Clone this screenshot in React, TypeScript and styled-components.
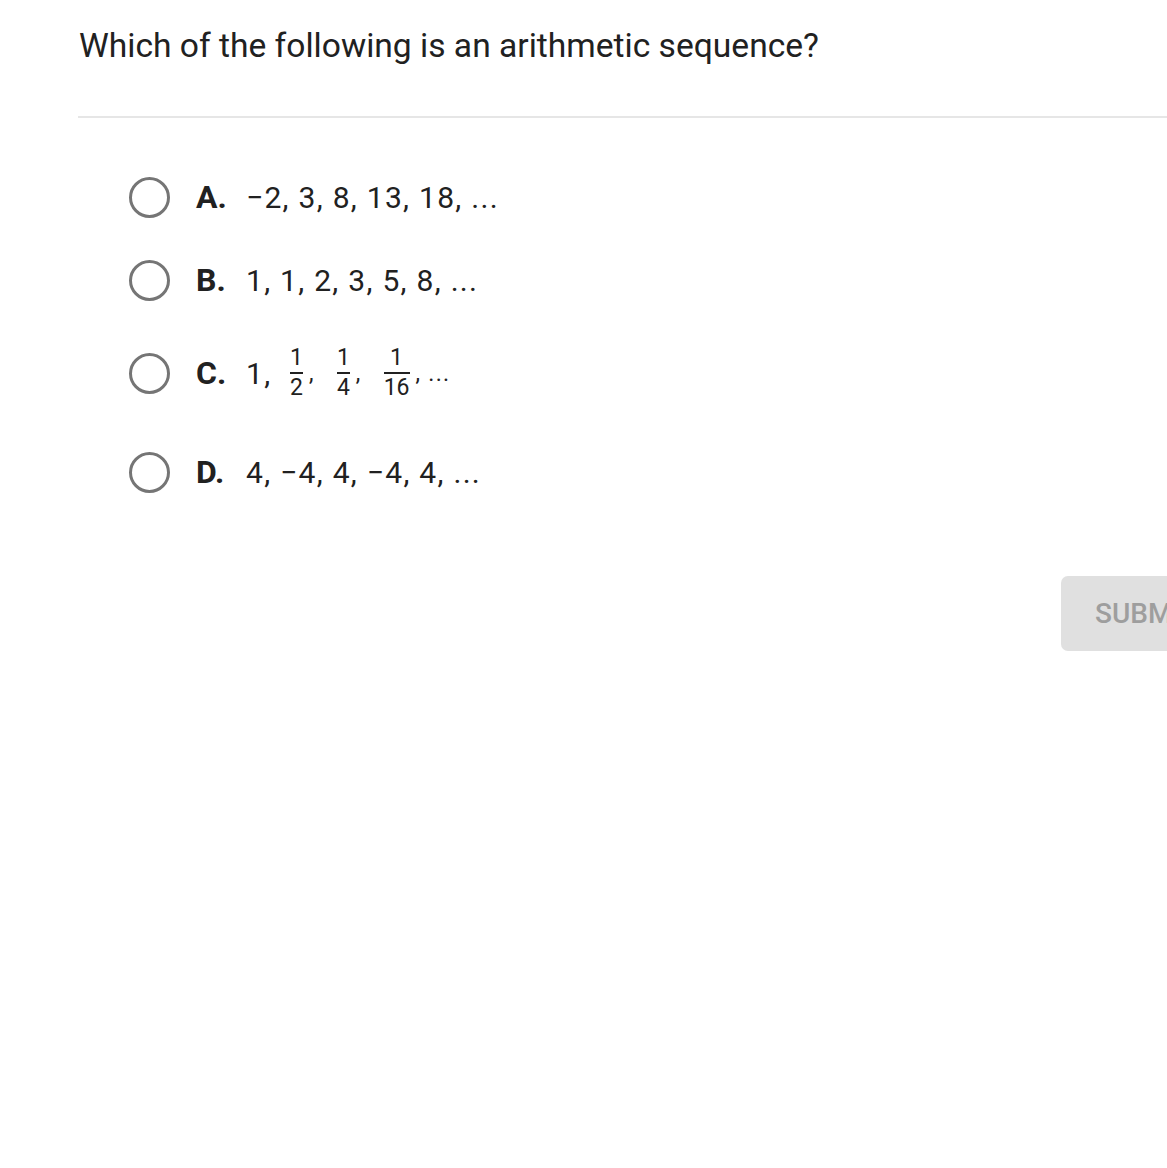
import styled, { createGlobalStyle } from "styled-components";

const GlobalStyle = createGlobalStyle`
  html, body {
    margin: 0;
    padding: 0;
    background: #ffffff;
    overflow: hidden;
  }
  body {
    font-family: Roboto, "Liberation Sans", Arial, sans-serif;
    color: #212121;
  }
`;

const Page = styled.div`
  width: 1280px;
  box-sizing: border-box;
  padding: 26px 19px 0 79px;
`;

const Question = styled.h1`
  margin: 0;
  font-size: 33.6px;
  font-weight: 400;
  line-height: 40px;
  color: #212121;
`;

const Divider = styled.hr`
  margin: 50px -19px 0 -1px;
  border: none;
  height: 2px;
  background: #e6e6e6;
`;

const Options = styled.div`
  display: flex;
  flex-direction: column;
  gap: 23px;
  margin-top: 49px;
  padding-left: 50px;
`;

const Option = styled.label<{ $tall?: boolean }>`
  display: flex;
  align-items: center;
  min-height: ${({ $tall }) => ($tall ? "80px" : "60px")};
  margin-bottom: ${({ $tall }) => ($tall ? "6px" : "0")};
  cursor: pointer;
`;

const Radio = styled.span`
  width: 35px;
  height: 35px;
  border-radius: 50%;
  border: 3.5px solid #757575;
  flex-shrink: 0;
  margin-right: 26px;
`;

const Letter = styled.span`
  font-size: 32px;
  font-weight: 700;
  width: 50px;
  flex-shrink: 0;
`;

const Answer = styled.span`
  font-size: 30px;
  letter-spacing: 1.3px;
  display: flex;
  align-items: center;
  white-space: pre;
`;

const Fraction = styled.span`
  display: inline-flex;
  flex-direction: column;
  align-items: center;
  font-size: 23px;
  line-height: 24px;
  letter-spacing: 0;
  padding: 0 2px;
  margin: 0 4px 0 8px;
`;

const Bar = styled.span`
  align-self: stretch;
  height: 2px;
  background: #212121;
  margin: 2px 0;
`;

const Comma = styled.span`
  font-size: 23px;
  align-self: center;
  margin-right: 12px;
`;

const Footer = styled.div`
  display: flex;
  justify-content: flex-end;
  margin-top: 74px;
`;

const SubmitButton = styled.button`
  width: 200px;
  height: 75px;
  border: none;
  border-radius: 7px;
  background: #e0e0e0;
  color: #9e9e9e;
  font-family: Roboto, "Liberation Sans", Arial, sans-serif;
  font-size: 28px;
  font-weight: 500;
  text-align: left;
  padding: 0 0 0 34px;
`;

function Frac({ n, d }: { n: string; d: string }) {
  return (
    <Fraction>
      <span>{n}</span>
      <Bar />
      <span>{d}</span>
    </Fraction>
  );
}

export default function App() {
  return (
    <>
      <GlobalStyle />
      <Page>
        <Question>Which of the following is an arithmetic sequence?</Question>
        <Divider />
        <Options>
          <Option>
            <Radio />
            <Letter>A.</Letter>
            <Answer>−2, 3, 8, 13, 18, ...</Answer>
          </Option>
          <Option>
            <Radio />
            <Letter>B.</Letter>
            <Answer>1, 1, 2, 3, 5, 8, ...</Answer>
          </Option>
          <Option $tall>
            <Radio />
            <Letter>C.</Letter>
            <Answer>
              {"1, "}
              <Frac n="1" d="2" />
              <Comma>,</Comma>
              <Frac n="1" d="4" />
              <Comma>,</Comma>
              <Frac n="1" d="16" />
              <Comma>, ...</Comma>
            </Answer>
          </Option>
          <Option>
            <Radio />
            <Letter>D.</Letter>
            <Answer>4, −4, 4, −4, 4, ...</Answer>
          </Option>
        </Options>
        <Footer>
          <SubmitButton>SUBMIT</SubmitButton>
        </Footer>
      </Page>
    </>
  );
}
